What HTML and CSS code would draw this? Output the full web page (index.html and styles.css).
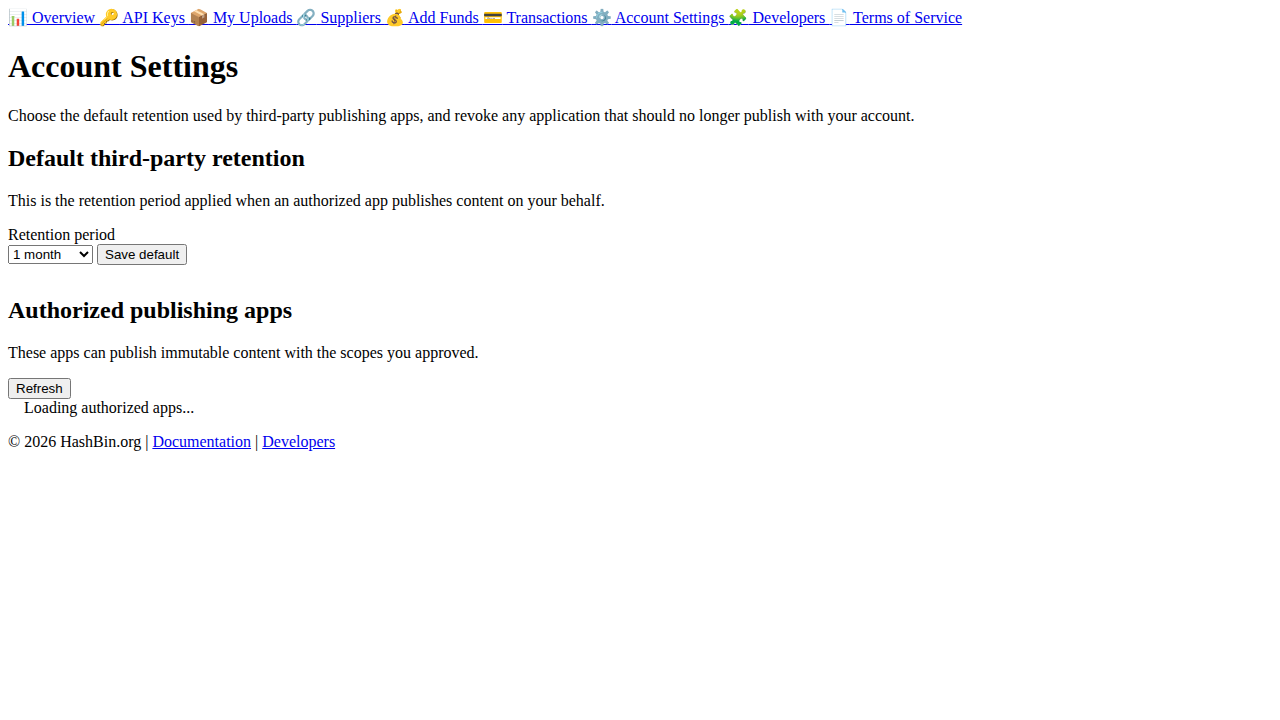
FILE: index.html
```html
<!DOCTYPE html>
<html lang="en">
<head>
<meta charset="utf-8">
<title>Account Settings</title>
<link rel="stylesheet" href="styles.css">
</head>
<body>
<nav>
<a href="#"><span>📊</span> Overview </a>
<a href="#"><span>🔑</span> API Keys </a>
<a href="#"><span>📦</span> My Uploads </a>
<a href="#"><span>🔗</span> Suppliers </a>
<a href="#"><span>💰</span> Add Funds </a>
<a href="#"><span>💳</span> Transactions </a>
<a href="#"><span>⚙️</span> Account Settings </a>
<a href="#"><span>🧩</span> Developers </a>
<a href="#"><span>📄</span> Terms of Service</a>
</nav>
<main>
<h1>Account Settings</h1>
<p>Choose the default retention used by third-party publishing apps, and revoke any application that should no longer publish with your account.</p>
<section class="retention">
<h2>Default third-party retention</h2>
<p>This is the retention period applied when an authorized app publishes content on your behalf.</p>
<form>
<label for="retention">Retention period</label><br>
<select id="retention"><option>1 month</option><option>6 months</option><option>12 months</option></select>
<button type="button">Save default</button>
</form>
</section>
<section>
<h2>Authorized publishing apps</h2>
<p>These apps can publish immutable content with the scopes you approved.</p>
<button type="button">Refresh</button>
<ul><li class="loading">Loading authorized apps...</li></ul>
</section>
</main>
<footer>
<p>© 2026 HashBin.org | <a href="#">Documentation</a> | <a href="#">Developers</a></p>
</footer>
</body>
</html>
```
FILE: styles.css
```css
body {
  font-family: "Liberation Serif", serif;
}
.retention {
  padding-bottom: 12px;
}
ul {
  list-style: none;
  margin: 0;
  padding: 0 0 0 16px;
}
footer p {
  margin: 16px 0;
}
```
